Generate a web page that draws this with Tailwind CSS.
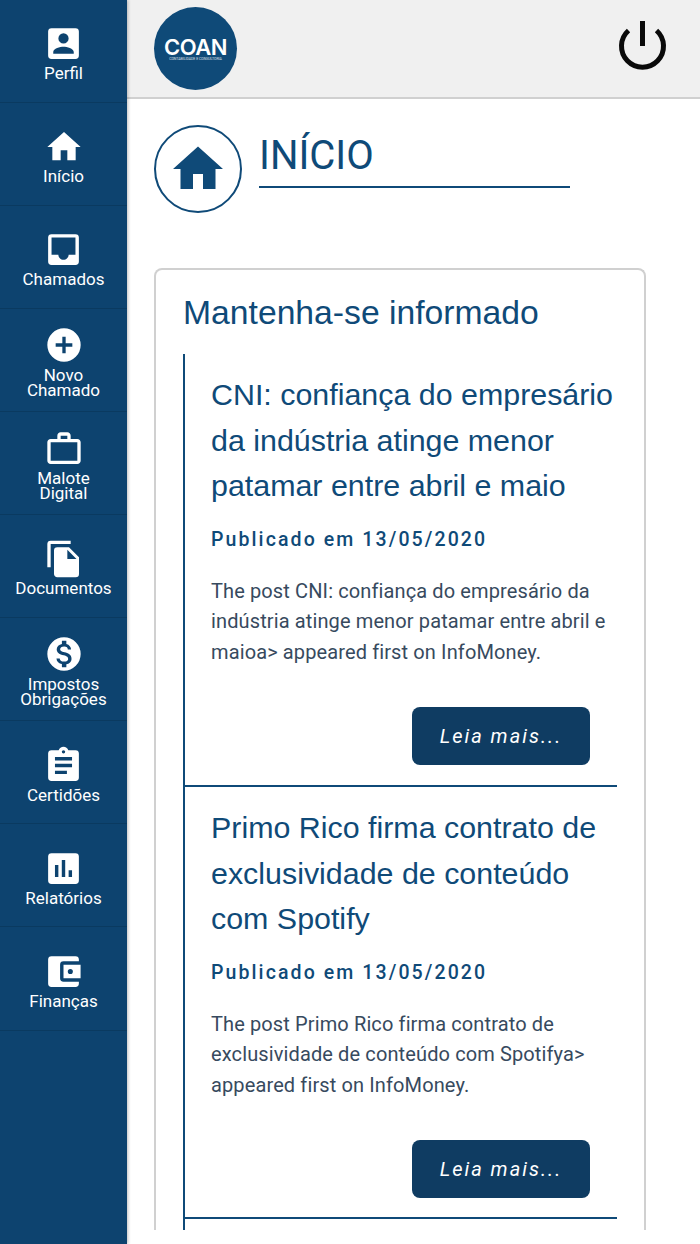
<!DOCTYPE html>
<html lang="pt-BR">
<head>
<meta charset="utf-8">
<title>Início</title>
<script src="https://cdn.jsdelivr.net/npm/@tailwindcss/browser@4"></script>
</head>
<body class="bg-white overflow-hidden">
<div class="flex w-[700px] h-[1244px] overflow-hidden font-['Roboto',sans-serif]">
  <!-- Side navigation -->
  <aside class="w-[127px] shrink-0 h-full bg-[#0d436f] text-white flex flex-col shadow-[1px_0_3px_rgba(0,0,0,0.25)] z-10">
    <a class="h-[103px] shrink-0 border-b border-[#0a3a60] flex flex-col items-center pt-[23px]">
      <svg class="w-[41px] h-[41px]" viewBox="0 0 24 24" fill="white"><path d="M3 5v14a2 2 0 0 0 2 2h14a2 2 0 0 0 2-2V5a2 2 0 0 0-2-2H5a2 2 0 0 0-2 2zm12 4a3 3 0 1 1-6 0 3 3 0 0 1 6 0zm-9 8c0-2 4-3.100 6-3.100s6 1.100 6 3.100v1H6v-1z"/></svg>
      <span class="text-[17px] leading-[15px] mt-[2px] text-center">Perfil</span>
    </a>
    <a class="h-[103px] shrink-0 border-b border-[#0a3a60] flex flex-col items-center pt-[24px]">
      <svg class="w-[40px] h-[40px]" viewBox="0 0 24 24" fill="white"><path d="M10 20v-6h4v6h5v-8h3L12 3 2 12h3v8z"/></svg>
      <span class="text-[17px] leading-[15px] mt-[2px] text-center">Início</span>
    </a>
    <a class="h-[103px] shrink-0 border-b border-[#0a3a60] flex flex-col items-center pt-[23px]">
      <svg class="w-[41px] h-[41px]" viewBox="0 0 24 24" fill="white"><path d="M19 3H5a2 2 0 0 0-2 2v14a2 2 0 0 0 2 2h14a2 2 0 0 0 2-2V5a2 2 0 0 0-2-2zm0 12h-4c0 1.660-1.350 3-3 3s-3-1.340-3-3H5V5h14v10z"/></svg>
      <span class="text-[17px] leading-[15px] mt-[2px] text-center">Chamados</span>
    </a>
    <a class="h-[103px] shrink-0 border-b border-[#0a3a60] flex flex-col items-center pt-[16px]">
      <svg class="w-[40px] h-[40px]" viewBox="0 0 24 24" fill="white"><path d="M12 2a10 10 0 1 0 0 20 10 10 0 0 0 0-20zm5 11h-4v4h-2v-4H7v-2h4V7h2v4h4v2z"/></svg>
      <span class="text-[17px] leading-[15px] mt-[3px] text-center">Novo<br>Chamado</span>
    </a>
    <a class="h-[103px] shrink-0 border-b border-[#0a3a60] flex flex-col items-center pt-[17px]">
      <svg class="w-[40px] h-[40px]" viewBox="0 0 24 24" fill="white"><path d="M20 6h-4V4c0-1.100-.9-2-2-2h-4c-1.100 0-2 .9-2 2v2H4c-1.100 0-2 .9-2 2v11c0 1.100.9 2 2 2h16c1.100 0 2-.9 2-2V8c0-1.100-.9-2-2-2zM10 4h4v2h-4V4zm10 15H4V8h16v11z"/></svg>
      <span class="text-[17px] leading-[15px] mt-[2px] text-center">Malote<br>Digital</span>
    </a>
    <a class="h-[103px] shrink-0 border-b border-[#0a3a60] flex flex-col items-center pt-[24px]">
      <svg class="w-[40px] h-[40px]" viewBox="0 0 24 24" fill="white"><path d="M16 1H4a2 2 0 0 0-2 2v14h2V3h12V1zm-1 4H8a2 2 0 0 0-2 2v14c0 1.100.9 2 2 2h11a2 2 0 0 0 2-2V11l-6-6zm-1 7V6.500l5.500 5.500H14z"/></svg>
      <span class="text-[17px] leading-[15px] mt-[2px] text-center">Documentos</span>
    </a>
    <a class="h-[103px] shrink-0 border-b border-[#0a3a60] flex flex-col items-center pt-[16px]">
      <svg class="w-[40px] h-[40px]" viewBox="0 0 24 24" fill="white"><path d="M12 2a10 10 0 1 0 0 20 10 10 0 0 0 0-20zm1.410 16.090V20h-2.670v-1.930c-1.710-.36-3.160-1.460-3.270-3.400h1.960c.1 1.050.82 1.870 2.650 1.870 1.960 0 2.400-.98 2.400-1.590 0-.83-.44-1.610-2.670-2.140-2.480-.6-4.180-1.620-4.180-3.670 0-1.720 1.390-2.840 3.110-3.210V4h2.670v1.950c1.860.45 2.790 1.860 2.850 3.390H14.300c-.05-1.110-.64-1.870-2.220-1.870-1.500 0-2.400.68-2.400 1.640 0 .84.65 1.390 2.670 1.910s4.180 1.390 4.180 3.910c-.01 1.830-1.380 2.830-3.120 3.160z"/></svg>
      <span class="text-[17px] leading-[15px] mt-[3px] text-center">Impostos<br>Obrigações</span>
    </a>
    <a class="h-[103px] shrink-0 border-b border-[#0a3a60] flex flex-col items-center pt-[24px]">
      <svg class="w-[41px] h-[41px]" viewBox="0 0 24 24" fill="white"><path d="M19 3h-4.180C14.400 1.840 13.300 1 12 1s-2.400.84-2.820 2H5a2 2 0 0 0-2 2v14a2 2 0 0 0 2 2h14a2 2 0 0 0 2-2V5a2 2 0 0 0-2-2zm-7 0a1 1 0 1 1 0 2 1 1 0 0 1 0-2zm2 14H7v-2h7v2zm3-4H7v-2h10v2zm0-4H7V7h10v2z"/></svg>
      <span class="text-[17px] leading-[15px] mt-[2px] text-center">Certidões</span>
    </a>
    <a class="h-[103px] shrink-0 border-b border-[#0a3a60] flex flex-col items-center pt-[24px]">
      <svg class="w-[41px] h-[41px]" viewBox="0 0 24 24" fill="white"><path d="M19 3H5a2 2 0 0 0-2 2v14a2 2 0 0 0 2 2h14a2 2 0 0 0 2-2V5a2 2 0 0 0-2-2zM9 17H7v-7h2v7zm4 0h-2V7h2v10zm4 0h-2v-4h2v4z"/></svg>
      <span class="text-[17px] leading-[15px] mt-[2px] text-center">Relatórios</span>
    </a>
    <a class="h-[104px] shrink-0 border-b border-[#0a3a60] flex flex-col items-center pt-[24px]">
      <svg class="w-[41px] h-[41px]" viewBox="0 0 24 24" fill="white"><path d="M21 18v1a2 2 0 0 1-2 2H5a2 2 0 0 1-2-2V5a2 2 0 0 1 2-2h14a2 2 0 0 1 2 2v1h-9a2 2 0 0 0-2 2v8a2 2 0 0 0 2 2h9zm-9-2h10V8H12v8zm4-2.500a1.500 1.500 0 1 1 0-3 1.500 1.500 0 0 1 0 3z"/></svg>
      <span class="text-[17px] leading-[15px] mt-[2px] text-center">Finanças</span>
    </a>
  </aside>

  <div class="flex-1 min-w-0 flex flex-col h-full">
    <!-- Top bar -->
    <header class="h-[99px] shrink-0 bg-[#f0f0f0] border-b-2 border-[#d0d0d0] flex items-start justify-between pl-[27px] pr-[33px] pt-[7px]">
      <div class="w-[83px] h-[83px] rounded-full bg-[#0f4a78] flex flex-col items-center justify-center text-white">
        <span class="font-['Inter',sans-serif] font-semibold text-[22px] leading-[20px] tracking-[-0.5px]">COAN</span>
        <span class="text-[3.500px] leading-[4px] text-white/80 whitespace-nowrap">CONTABILIDADE E CONSULTORIA</span>
      </div>
      <svg class="w-[50px] h-[50px] mt-[13px]" viewBox="0 0 50 50" fill="none" stroke="#0a0a0a" stroke-width="5"><path d="M11.500 10.500a21 21 0 1 0 28 0"/><path d="M25.500 1v25"/></svg>
    </header>

    <!-- Page title -->
    <section class="flex pl-[27px] pt-[26px] shrink-0">
      <div class="w-[88px] h-[88px] rounded-full border-2 border-[#0f4a78] flex items-center justify-center">
        <svg class="w-[60px] h-[60px]" viewBox="0 0 24 24" fill="#0f4a78"><path d="M10 20v-6h4v6h5v-8h3L12 3 2 12h3v8z"/></svg>
      </div>
      <h1 class="ml-[17px] w-[311px] h-[63px] border-b-2 border-[#0f4a78] text-[40px] leading-[62px] text-[#0f4a78]">INÍCIO</h1>
    </section>

    <!-- News card -->
    <section class="ml-[27px] mt-[55px] w-[492px] h-[962px] shrink-0 border-2 border-b-0 border-[#d0d0d0] rounded-t-lg overflow-hidden pl-[27px] pr-[27px]">
      <h2 class="font-['Liberation_Sans',sans-serif] text-[33.700px] leading-[40px] pt-[22px] h-[84px] text-[#0f4a78]">Mantenha-se informado</h2>
      <div class="border-l-2 border-[#0f4a78]">
        <article class="h-[433px] border-b-2 border-[#0f4a78] pl-[26px]">
          <h3 class="font-['Liberation_Sans',sans-serif] text-[30.400px] leading-[45.600px] pt-[18px] text-[#0f4a78]">CNI: confiança do empresário da indústria atinge menor patamar entre abril e maio</h3>
          <p class="font-medium text-[19.500px] leading-[24px] tracking-[2.100px] text-[#0f4a78] mt-[19px]">Publicado em 13/05/2020</p>
          <p class="text-[20px] tracking-[0.120px] leading-[30.500px] text-[#374a5e] mt-[24px] pr-[6px]">The post CNI: confiança do empresário da indústria atinge menor patamar entre abril e maioa&gt; appeared first on InfoMoney.</p>
          <div class="flex justify-end pr-[27px] mt-[40px]">
            <a class="w-[178px] h-[58px] rounded-lg bg-[#0f3c62] text-white italic text-[20px] tracking-[2px] flex items-center justify-center">Leia mais...</a>
          </div>
        </article>
        <article class="h-[432px] border-b-2 border-[#0f4a78] pl-[26px]">
          <h3 class="font-['Liberation_Sans',sans-serif] text-[30.400px] leading-[45.600px] pt-[18px] text-[#0f4a78]">Primo Rico firma contrato de exclusividade de conteúdo com Spotify</h3>
          <p class="font-medium text-[19.500px] leading-[24px] tracking-[2.100px] text-[#0f4a78] mt-[19px]">Publicado em 13/05/2020</p>
          <p class="text-[20px] tracking-[0.120px] leading-[30.500px] text-[#374a5e] mt-[24px] pr-[6px]">The post Primo Rico firma contrato de exclusividade de conteúdo com Spotifya&gt; appeared first on InfoMoney.</p>
          <div class="flex justify-end pr-[27px] mt-[40px]">
            <a class="w-[178px] h-[58px] rounded-lg bg-[#0f3c62] text-white italic text-[20px] tracking-[2px] flex items-center justify-center">Leia mais...</a>
          </div>
        </article>
        <div class="h-[40px]"></div>
      </div>
    </section>
  </div>
</div>
</body>
</html>
